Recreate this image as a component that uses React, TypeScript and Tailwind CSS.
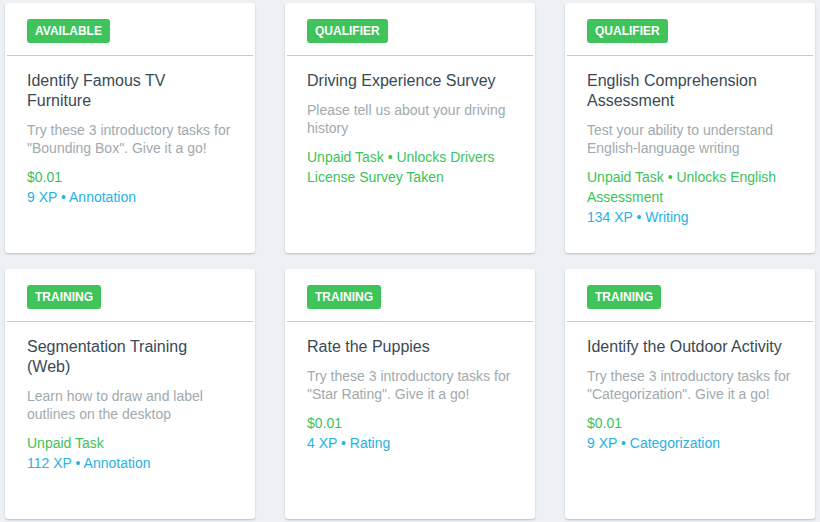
type Task = {
	badge: string
	title: string
	description: string
	lines: { text: string; tone: 'green' | 'blue' }[]
}

const tasks: Task[] = [
	{
		badge: 'Available',
		title: 'Identify Famous TV Furniture',
		description: 'Try these 3 introductory tasks for "Bounding Box". Give it a go!',
		lines: [
			{ text: '$0.01', tone: 'green' },
			{ text: '9 XP • Annotation', tone: 'blue' },
		],
	},
	{
		badge: 'Qualifier',
		title: 'Driving Experience Survey',
		description: 'Please tell us about your driving history',
		lines: [{ text: 'Unpaid Task • Unlocks Drivers License Survey Taken', tone: 'green' }],
	},
	{
		badge: 'Qualifier',
		title: 'English Comprehension Assessment',
		description: 'Test your ability to understand English-language writing',
		lines: [
			{ text: 'Unpaid Task • Unlocks English Assessment', tone: 'green' },
			{ text: '134 XP • Writing', tone: 'blue' },
		],
	},
	{
		badge: 'Training',
		title: 'Segmentation Training (Web)',
		description: 'Learn how to draw and label outlines on the desktop',
		lines: [
			{ text: 'Unpaid Task', tone: 'green' },
			{ text: '112 XP • Annotation', tone: 'blue' },
		],
	},
	{
		badge: 'Training',
		title: 'Rate the Puppies',
		description: 'Try these 3 introductory tasks for "Star Rating". Give it a go!',
		lines: [
			{ text: '$0.01', tone: 'green' },
			{ text: '4 XP • Rating', tone: 'blue' },
		],
	},
	{
		badge: 'Training',
		title: 'Identify the Outdoor Activity',
		description: 'Try these 3 introductory tasks for "Categorization". Give it a go!',
		lines: [
			{ text: '$0.01', tone: 'green' },
			{ text: '9 XP • Categorization', tone: 'blue' },
		],
	},
]

const TaskCard = (props: { task: Task }) => {
	const { task } = props
	return (
		<div className="w-[250px] h-[250px] bg-white rounded-[3px] shadow-[0_1px_2px_rgba(0,0,0,0.22)] flex flex-col">
			<div className="flex pt-4 pb-3 px-[22px]">
				<span className="flex items-center h-6 px-2 pb-px rounded-[3px] bg-[#3ec45a] text-white text-[12px] font-bold uppercase">
					{task.badge}
				</span>
			</div>
			<div className="mx-[2px] h-px bg-[#c6c9cb]" />
			<div className="pt-[15px] px-[22px]">
				<h3 className="text-[16px] leading-[20px] text-[#394a54]">{task.title}</h3>
				<p className="mt-[10px] text-[14px] leading-[18px] text-[#a1aaae]">
					{task.description}
				</p>
				<div className="mt-[10px] text-[14px] leading-[20px]">
					{task.lines.map((line) => (
						<div
							key={line.text}
							className={line.tone === 'green' ? 'text-[#3cc25a]' : 'text-[#27b2e3]'}
						>
							{line.text}
						</div>
					))}
				</div>
			</div>
		</div>
	)
}

export default function App() {
	return (
		<div className="min-h-[522px] bg-[#eef1f3] pt-[3px] px-[5px] font-['Liberation_Sans',Arial,sans-serif]">
			<div className="grid grid-cols-[repeat(3,250px)] gap-x-[30px] gap-y-4">
				{tasks.map((task) => (
					<TaskCard key={task.title} task={task} />
				))}
			</div>
		</div>
	)
}
